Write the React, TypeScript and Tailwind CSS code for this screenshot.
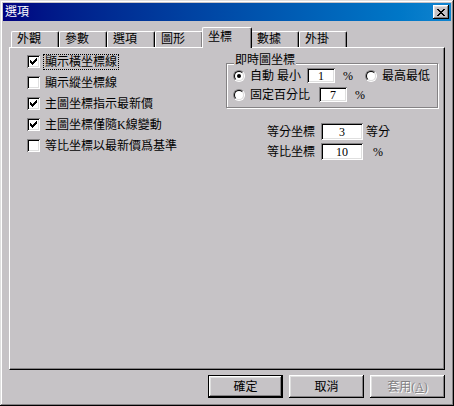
import type { ReactNode } from "react";

const RAISED =
  "shadow-[inset_-1px_-1px_#000,inset_1px_1px_#fff,inset_-2px_-2px_#848284,inset_2px_2px_#dfdfdf]";
const SUNKEN =
  "shadow-[inset_1px_1px_#848284,inset_-1px_-1px_#fff,inset_2px_2px_#000,inset_-2px_-2px_#dfdfdf]";

const CHECK = ["......X", ".....XX", "X...XXX", "XX.XXX.", "XXXXX..", ".XXX...", "..X...."];
const CLOSE = ["XX....XX", ".XX..XX.", "..XXXX..", "...XX...", "..XXXX..", ".XX..XX.", "XX....XX"];

function Pixels({ rows }: { rows: string[] }) {
  return (
    <svg width={rows[0].length} height={rows.length} shapeRendering="crispEdges">
      {rows.map((r, y) =>
        r.split("").map((c, x) => (c === "X" ? <rect key={`${x}-${y}`} x={x} y={y} width="1" height="1" fill="#000" /> : null))
      )}
    </svg>
  );
}

function CheckBox({ on }: { on?: boolean }) {
  return (
    <span className={`w-[13px] h-[13px] shrink-0 bg-white flex items-center justify-center ${SUNKEN}`}>
      {on && <Pixels rows={CHECK} />}
    </span>
  );
}

function Radio({ on }: { on?: boolean }) {
  return (
    <span className="w-[12px] h-[12px] shrink-0 rounded-full border border-t-[#848284] border-l-[#848284] border-r-white border-b-white">
      <span className="w-full h-full rounded-full bg-white border border-t-black border-l-black border-r-[#dfdfdf] border-b-[#dfdfdf] flex items-center justify-center">
        {on && <span className="w-[4px] h-[4px] rounded-full bg-black" />}
      </span>
    </span>
  );
}

function Field({ value, w, h }: { value: string; w: string; h: string }) {
  return (
    <span className={`${w} ${h} shrink-0 bg-white flex items-center justify-center leading-none ${SUNKEN}`}>{value}</span>
  );
}

function Tab({ label, active }: { label: string; active?: boolean }) {
  if (active) {
    return (
      <div className="w-[50px] h-[21px] -mx-[1px] -mb-[1px] relative z-10 bg-[#c6c3c6] border-t border-l border-white border-r border-r-black rounded-tl-[2px] rounded-tr-[2px] shadow-[inset_-1px_0_#848284] pl-[5px] pt-[2px] leading-[14px]">
        {label}
      </div>
    );
  }
  return (
    <div className="w-[48px] h-[16px] border-t border-l border-white border-r border-r-black rounded-tl-[2px] rounded-tr-[2px] shadow-[inset_-1px_0_#848284] pl-[5px] leading-[14px]">
      {label}
    </div>
  );
}

function Option({ on, focus, children }: { on?: boolean; focus?: boolean; children: ReactNode }) {
  return (
    <div className="flex items-center h-[13px]">
      <CheckBox on={on} />
      <span className={`ml-[4px] px-[1px] leading-[14px] ${focus ? "outline-1 outline-dotted outline-black" : ""}`}>
        {children}
      </span>
    </div>
  );
}

function Button({ children, isDefault, disabled }: { children: ReactNode; isDefault?: boolean; disabled?: boolean }) {
  return (
    <div
      className={`w-[75px] h-[23px] flex items-center justify-center bg-[#c6c3c6] ${
        isDefault ? "border border-black" : ""
      }`}
    >
      <div className={`w-full h-full flex items-center justify-center ${RAISED}`}>
        <span className={disabled ? "text-[#848284] [text-shadow:1px_1px_#fff]" : ""}>{children}</span>
      </div>
    </div>
  );
}

export default function App() {
  return (
    <div className="w-[454px] h-[406px] bg-[#c6c3c6] p-[3px] flex flex-col text-[12px] text-black font-['Liberation_Serif','Noto_Sans_CJK_TC',serif] shadow-[inset_-1px_-1px_#000,inset_1px_1px_#dfdfdf,inset_-2px_-2px_#848284,inset_2px_2px_#fff]">
      {/* title bar */}
      <div className="h-[18px] shrink-0 bg-gradient-to-r from-[#000080] to-[#1084d0] flex items-center justify-between pl-[2px] pr-[2px]">
        <span className="text-white leading-[14px]">選項</span>
        <div className={`w-[16px] h-[14px] bg-[#c6c3c6] flex items-center justify-center ${RAISED}`}>
          <Pixels rows={CLOSE} />
        </div>
      </div>

      <div className="mx-[6px] mt-[6px] flex flex-col">
        <div className="flex items-end h-[20px] pl-[2px] relative z-10">
          <Tab label="外觀" />
          <Tab label="參數" />
          <Tab label="選項" />
          <Tab label="圖形" />
          <Tab label="坐標" active />
          <Tab label="數據" />
          <Tab label="外掛" />
        </div>

        <div className="h-[323px] border-l border-t border-white border-r border-b border-r-black border-b-black shadow-[inset_-1px_-1px_#848284] pl-[17px] pt-[7px] flex">
          <div className="w-[199px] shrink-0 flex flex-col gap-[8px]">
            <Option on focus>顯示橫坐標線</Option>
            <Option>顯示縱坐標線</Option>
            <Option on>主圖坐標指示最新價</Option>
            <Option on>主圖坐標僅隨K線變動</Option>
            <Option>等比坐標以最新價爲基準</Option>
          </div>

          <div className="w-[212px] shrink-0 mt-[8px] flex flex-col">
            <div className="relative h-[45px] border border-[#848284] shadow-[inset_1px_1px_#fff,1px_1px_#fff] pl-[6px] pt-[4px] flex flex-col gap-[4px]">
              <span className="absolute -top-[11px] left-[7px] px-[1px] bg-[#c6c3c6] leading-[14px]">即時圖坐標</span>
              <div className="flex items-center h-[15px]">
                <Radio on />
                <span className="w-[62px] shrink-0 pl-[5px] leading-[14px]">自動 最小</span>
                <Field value="1" w="w-[28px]" h="h-[15px]" />
                <span className="w-[30px] shrink-0 pl-[8px] leading-[14px]">%</span>
                <Radio />
                <span className="pl-[5px] leading-[14px]">最高最低</span>
              </div>
              <div className="flex items-center h-[15px]">
                <Radio />
                <span className="w-[74px] shrink-0 pl-[5px] leading-[14px]">固定百分比</span>
                <Field value="7" w="w-[28px]" h="h-[15px]" />
                <span className="pl-[8px] leading-[14px]">%</span>
              </div>
            </div>

            <div className="mt-[15px] pl-[41px] flex flex-col gap-[3px]">
              <div className="flex items-center h-[17px]">
                <span className="w-[54px] shrink-0 leading-[14px]">等分坐標</span>
                <Field value="3" w="w-[42px]" h="h-[17px]" />
                <span className="pl-[3px] leading-[14px]">等分</span>
              </div>
              <div className="flex items-center h-[17px]">
                <span className="w-[54px] shrink-0 leading-[14px]">等比坐標</span>
                <Field value="10" w="w-[42px]" h="h-[17px]" />
                <span className="pl-[10px] leading-[14px]">%</span>
              </div>
            </div>
          </div>
        </div>

        <div className="mt-[5px] flex justify-end gap-[6px]">
          <Button isDefault>確定</Button>
          <Button>取消</Button>
          <Button disabled>
            套用(<span className="underline">A</span>)
          </Button>
        </div>
      </div>
    </div>
  );
}
